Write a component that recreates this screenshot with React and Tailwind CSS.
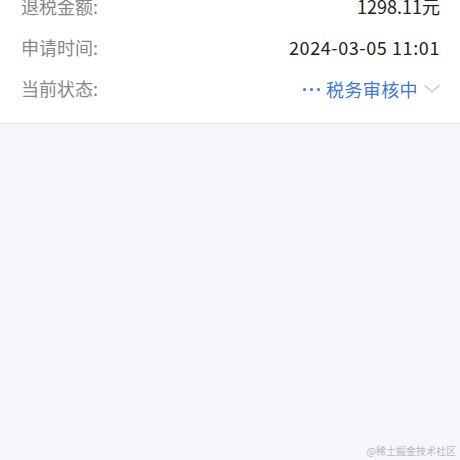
const ROWS = [
  { label: '退税金额:', value: '1298.11元', track: 'tracking-[0px]' },
  { label: '申请时间:', value: '2024-03-05 11:01', track: 'tracking-[0.6px]' },
];

function Chevron() {
  return (
    <svg width="16" height="10" viewBox="0 0 16 10" fill="none" className="ml-[6px]">
      <path d="M1 1.5L8 8L15 1.5" stroke="#c4c4c4" strokeWidth="1.2" strokeLinecap="round" strokeLinejoin="round" />
    </svg>
  );
}

function Row({ label, children }) {
  return (
    <div className="h-[41px] flex items-center justify-between">
      <span className="text-[18px] text-[#878787]">{label}</span>
      <div className="flex items-center">{children}</div>
    </div>
  );
}

export default function App() {
  return (
    <div
      className="w-[460px] h-[460px] overflow-hidden bg-[#f5f6fa] relative"
      style={{ fontFamily: '"Noto Sans CJK SC", "Noto Sans", sans-serif' }}
    >
      <div className="bg-white border-b border-[#e6e7eb] pl-[21px] pr-[20px] pb-[14px] -mt-[14px]">
        {ROWS.map((r) => (
          <Row key={r.label} label={r.label}>
            <span className={`text-[18px] text-[#222] ${r.track}`}>{r.value}</span>
          </Row>
        ))}
        <Row label="当前状态:">
          <div className="flex items-center gap-[4px] mr-[6px] mt-[2px]">
            <span className="w-[3px] h-[3px] rounded-full bg-[#3e77d6]" />
            <span className="w-[3px] h-[3px] rounded-full bg-[#3e77d6]" />
            <span className="w-[3px] h-[3px] rounded-full bg-[#3e77d6]" />
          </div>
          <span className="text-[18px] text-[#3e77d6] mt-[2px] tracking-[0.4px]">税务审核中</span>
          <Chevron />
        </Row>
      </div>
      <div className="absolute right-[4px] bottom-[2px] text-[10px] text-[#b8b8b8]">@稀土掘金技术社区</div>
    </div>
  );
}
